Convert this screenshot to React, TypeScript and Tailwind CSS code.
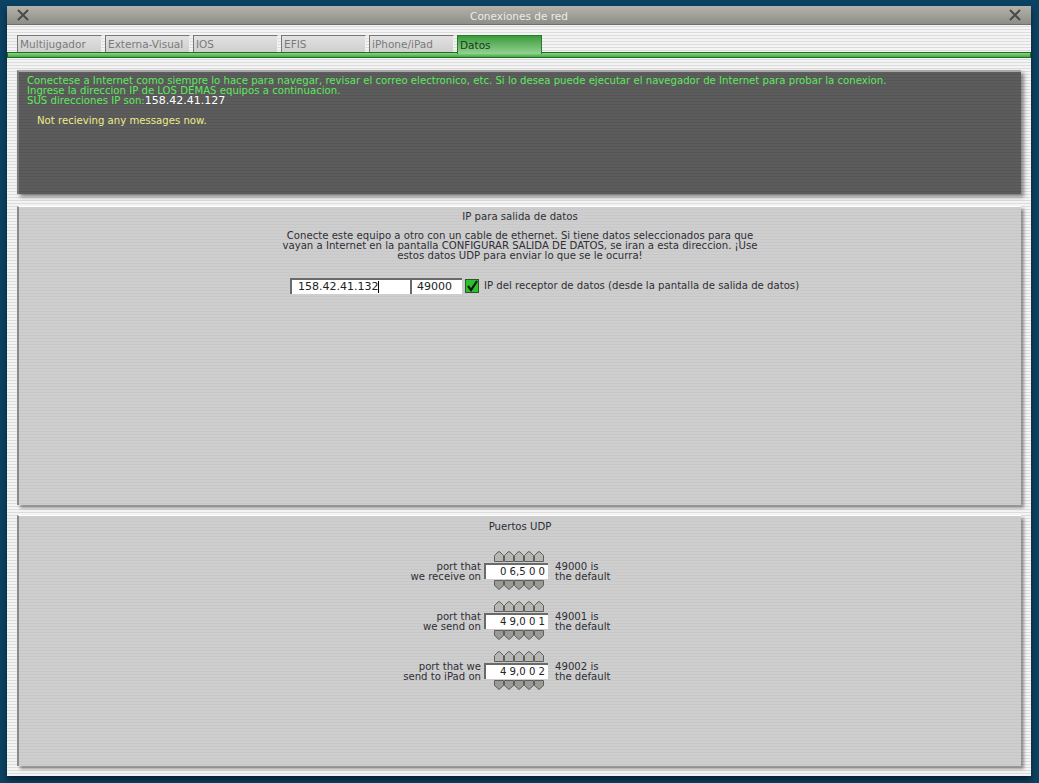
import React from "react"

const tabs = ["Multijugador", "Externa-Visual", "IOS", "EFIS", "iPhone/iPad"]

function CloseX() {
    return (
        <svg width="12" height="12" viewBox="0 0 12 12" className="block">
            <path d="M1 1 L11 11 M11 1 L1 11" stroke="#4a4a48" strokeWidth="2" />
        </svg>
    )
}

function Arrows({ down }: { down?: boolean }) {
    return (
        <svg width="52" height="11" viewBox="0 0 52 11" className="block">
            {[0, 1, 2, 3, 4].map((i) => {
                const x = i * 10 + 0.5
                const d = down
                    ? `M${x} 0.5 H${x + 9} V5.5 L${x + 4.5} 9.5 L${x} 5.5 Z`
                    : `M${x} 10.5 V4.5 L${x + 3.5} 1 Q${x + 4.5} 0.2 ${x + 5.5} 1 L${x + 9} 4.5 V10.5 Z`
                return (
                    <path
                        key={i}
                        d={d}
                        fill={down ? "#9a9a96" : "#b6b6b2"}
                        stroke="#5e5e5c"
                        strokeWidth="1"
                    />
                )
            })}
        </svg>
    )
}

function PortRow({ l1, l2, value, def }: { l1: string; l2: string; value: string; def: string }) {
    return (
        <div className="flex items-center ml-[262px]">
            <div className="w-[200px] text-right leading-[10px] mt-[2px]">
                {l1}
                <br />
                {l2}
            </div>
            <div className="ml-[3px] flex flex-col w-[64px]">
                <div className="pl-[10px]">
                    <Arrows />
                </div>
                <div className="w-[64px] h-[16px] my-[1px] bg-white border-t-2 border-l-2 border-[#6a6a6a] flex items-center justify-end pr-[3px] whitespace-pre text-[#222]">
                    {value}
                </div>
                <div className="pl-[10px]">
                    <Arrows down />
                </div>
            </div>
            <div className="ml-[7px] leading-[10px] mt-[2px]">
                {def} is
                <br />
                the default
            </div>
        </div>
    )
}

export default function App() {
    return (
        <div
            className="w-[1039px] h-[783px] bg-[#0c4262] pt-[6px] pl-[7px] overflow-hidden text-[10.15px]"
            style={{ fontFamily: '"DejaVu Sans", sans-serif' }}
        >
            <div className="w-[1024px] h-[770px] flex flex-col shadow-[0_4px_6px_rgba(0,0,0,0.5)] bg-[repeating-linear-gradient(180deg,#f4f4f4_0px,#f4f4f4_2px,#dcdcdc_2px,#dcdcdc_3px)]">
                {/* title bar */}
                <div className="h-[19px] flex items-center justify-between px-[10px] bg-gradient-to-b from-[#b4b4ac] to-[#8e8e88] border-b border-[#6e6e6a] text-[#ecece6] text-[10.5px]">
                    <CloseX />
                    <span className="pt-[3px]">Conexiones de red</span>
                    <CloseX />
                </div>

                {/* tabs */}
                <div className="flex gap-[3px] pl-[10px] mt-[10px] h-[17px]">
                    {tabs.map((t) => (
                        <div
                            key={t}
                            className="w-[85px] h-[17px] border border-[#777] border-r-[#eee] border-b-0 bg-gradient-to-b from-[#e2e2e2] to-[#cfcfcf] text-[#7a7a7a] text-[10.5px] pl-[2px] leading-[16px] overflow-hidden whitespace-nowrap"
                        >
                            {t}
                        </div>
                    ))}
                    <div className="w-[85px] h-[19px] border border-[#2a7a2a] border-b-0 bg-gradient-to-b from-[#3a9c3a] to-[#92d292] text-[#1a3a24] text-[10.5px] pl-[2px] leading-[18px] relative z-10">
                        Datos
                    </div>
                </div>
                <div className="h-[6px] border border-[#1e6e1e] bg-gradient-to-b from-[#8ad48a] to-[#46a846]" />

                {/* panels */}
                <div className="flex flex-col px-[10px] pt-[12px] pb-[10px] flex-1">
                    <div className="h-[124px] bg-[repeating-linear-gradient(180deg,#5c5c5c_0px,#5c5c5c_2px,#565656_2px,#565656_3px)] border-t-2 border-l-2 border-t-[#a8a8a8] border-l-[#7a7a7a] shadow-[3px_3px_4px_rgba(0,0,0,0.45)] pl-[8px] pt-[4px] leading-[10px]">
                        <div className="text-[#5ee85e]">
                            Conectese a Internet como siempre lo hace para navegar, revisar el correo electronico, etc. Si lo desea puede ejecutar el navegador de Internet para probar la conexion.
                        </div>
                        <div className="text-[#5ee85e]">Ingrese la direccion IP de LOS DEMAS equipos a continuacion.</div>
                        <div className="text-[#5ee85e]">
                            SUS direcciones IP son:<span className="text-white text-[11px]">158.42.41.127</span>
                        </div>
                        <div className="text-[#ecec8c] mt-[10px] pl-[10px]">Not recieving any messages now.</div>
                    </div>

                    <div className="mt-[12px] h-[299px] bg-[repeating-linear-gradient(180deg,#cecece_0px,#cecece_2px,#c8c8c8_2px,#c8c8c8_3px)] border-t border-white border-l-2 border-l-[#8a8a8a] shadow-[3px_3px_3px_rgba(0,0,0,0.4)] text-[#2e2e36]">
                        <div className="text-center pt-[4px] leading-[12px]">IP para salida de datos</div>
                        <div className="text-center mt-[8px] leading-[10px]">
                            Conecte este equipo a otro con un cable de ethernet. Si tiene datos seleccionados para que
                            <br />
                            vayan a Internet en la pantalla CONFIGURAR SALIDA DE DATOS, se iran a esta direccion. ¡Use
                            <br />
                            estos datos UDP para enviar lo que se le ocurra!
                        </div>
                        <div className="flex items-center ml-[271px] mt-[17px]">
                            <div className="w-[120px] h-[16px] bg-white border-t-2 border-l-2 border-[#6a6a6a] pl-[6px] leading-[14px] text-[11px] text-[#222]">
                                158.42.41.132<span className="inline-block w-px h-[12px] bg-black align-middle" />
                            </div>
                            <div className="w-[52px] h-[16px] bg-white border-t-2 border-l-2 border-[#6a6a6a] pl-[5px] leading-[14px] text-[11px] text-[#222]">
                                49000
                            </div>
                            <svg width="14" height="14" viewBox="0 0 14 14" className="ml-[3px] block">
                                <rect x="0.5" y="0.5" width="13" height="13" fill="#2fc02f" stroke="#2a5a2a" />
                                <path d="M3 7 L6 11 L12 2" stroke="#0a1a0a" strokeWidth="2.2" fill="none" />
                            </svg>
                            <span className="ml-[5px]">IP del receptor de datos (desde la pantalla de salida de datos)</span>
                        </div>
                    </div>

                    <div className="mt-[10px] flex-1 bg-[repeating-linear-gradient(180deg,#cecece_0px,#cecece_2px,#c8c8c8_2px,#c8c8c8_3px)] border-t border-white border-l-2 border-l-[#8a8a8a] shadow-[3px_3px_3px_rgba(0,0,0,0.4)] text-[#2e2e36]">
                        <div className="text-center pt-[5px] leading-[12px]">Puertos UDP</div>
                        <div className="flex flex-col gap-[10px] mt-[18px]">
                            <PortRow l1="port that" l2="we receive on" value="0 6,5 0 0" def="49000" />
                            <PortRow l1="port that" l2="we send on" value="4 9,0 0 1" def="49001" />
                            <PortRow l1="port that we" l2="send to iPad on" value="4 9,0 0 2" def="49002" />
                        </div>
                    </div>
                </div>
            </div>
        </div>
    )
}
